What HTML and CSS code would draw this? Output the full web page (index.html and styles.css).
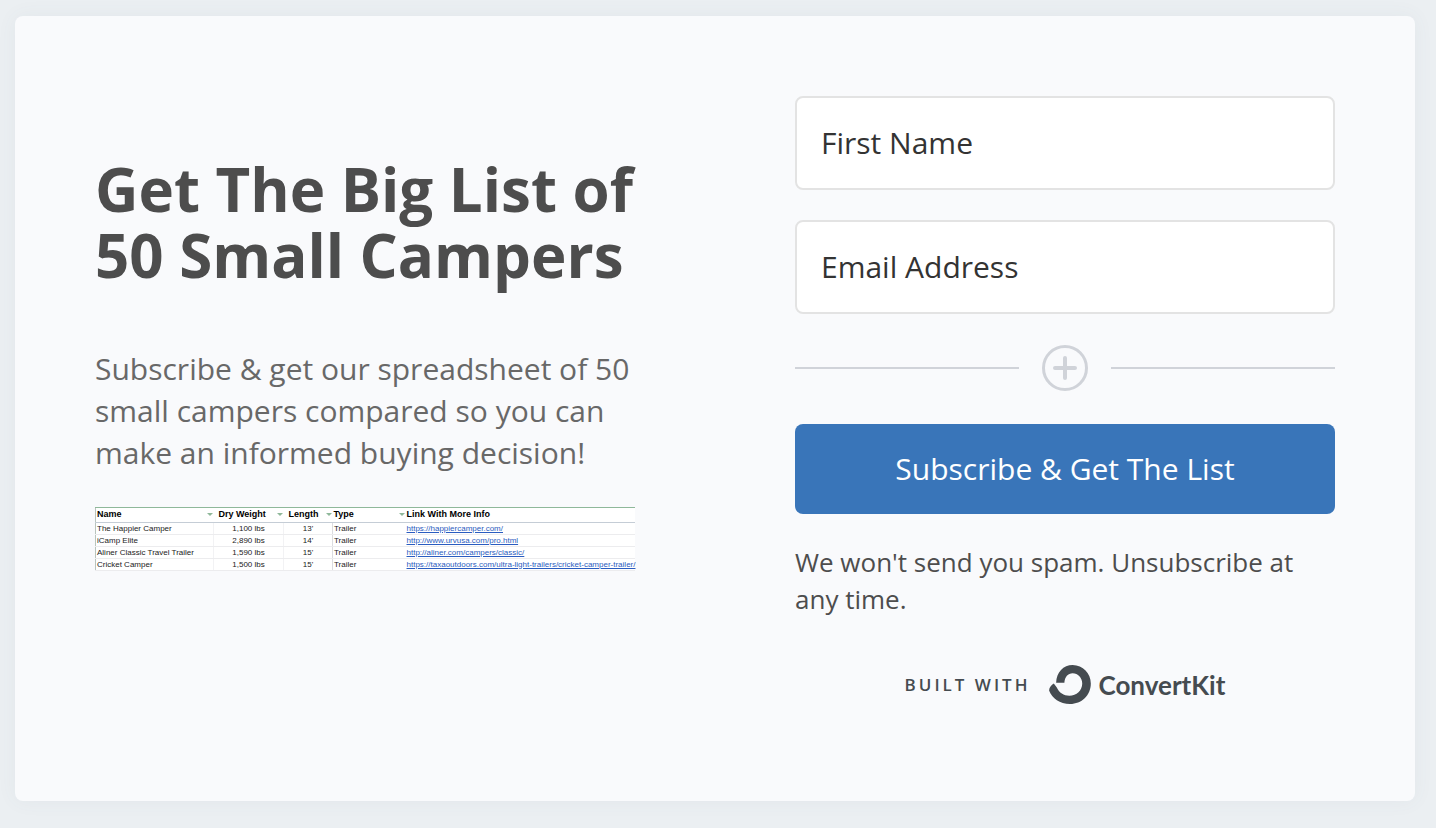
FILE: index.html
```html
<!DOCTYPE html>
<html lang="en">
<head>
  <meta charset="UTF-8">
  <meta name="viewport" content="width=device-width, initial-scale=1.0">
  <title>Get The Big List of 50 Small Campers</title>
  <link rel="stylesheet" href="styles.css">
</head>
<body>
  <main class="card">
    <section class="intro">
      <h1>Get The Big List of 50 Small Campers</h1>
      <p>Subscribe &amp; get our spreadsheet of 50 small campers compared so you can make an informed buying decision!</p>
      <table class="campers">
        <thead>
          <tr>
            <th class="name"><span>Name<i class="filter"></i></span></th>
            <th class="weight"><span>Dry Weight<i class="filter"></i></span></th>
            <th class="length"><span>Length<i class="filter"></i></span></th>
            <th class="type"><span>Type<i class="filter"></i></span></th>
            <th>Link With More Info</th>
          </tr>
        </thead>
        <tbody>
          <tr><td>The Happier Camper</td><td>1,100 lbs</td><td>13'</td><td>Trailer</td><td><a href="https://happiercamper.com/">https://happiercamper.com/</a></td></tr>
          <tr><td>iCamp Elite</td><td>2,890 lbs</td><td>14'</td><td>Trailer</td><td><a href="http://www.urvusa.com/pro.html">http://www.urvusa.com/pro.html</a></td></tr>
          <tr><td>Aliner Classic Travel Trailer</td><td>1,590 lbs</td><td>15'</td><td>Trailer</td><td><a href="http://aliner.com/campers/classic/">http://aliner.com/campers/classic/</a></td></tr>
          <tr><td>Cricket Camper</td><td>1,500 lbs</td><td>15'</td><td>Trailer</td><td><a href="https://taxaoutdoors.com/ultra-light-trailers/cricket-camper-trailer/">https://taxaoutdoors.com/ultra-light-trailers/cricket-camper-trailer/</a></td></tr>
        </tbody>
      </table>
    </section>

    <form class="signup">
      <input type="text" name="first_name" placeholder="First Name" aria-label="First Name">
      <input type="email" name="email" placeholder="Email Address" aria-label="Email Address">
      <div class="divider">
        <svg width="46" height="46" viewBox="0 0 46 46" fill="none" stroke="currentColor" aria-hidden="true">
          <circle cx="23" cy="23" r="21.5" stroke-width="3"/>
          <path d="M23 13v20M13 23h20" stroke-width="4" stroke-linecap="round"/>
        </svg>
      </div>
      <button type="submit">Subscribe &amp; Get The List</button>
      <p class="note">We won't send you spam. Unsubscribe at any time.</p>
      <a class="built" href="https://convertkit.com">
        <span class="built-with">Built with</span>
        <svg width="42" height="39" viewBox="0 0 126 118" aria-hidden="true">
          <path fill="currentColor" d="M21 54C22 22 43 0 71 0c31 0 55 25 55 56 0 36-28 62-63 62C32 118 9 101 0 78c-1-9 6-17 14-22l9 12c7 16 21 25 38 25 22 0 39-16 39-37 0-18-13-31-29-31-14 0-24 11-25 29z"/>
        </svg>
        <span class="brand">ConvertKit</span>
      </a>
    </form>
  </main>
</body>
</html>
```
FILE: styles.css
```css
* {
  box-sizing: border-box;
}
body {
  margin: 0;
  padding: 16px 21px 27px 15px;
  background: #ebeff2;
  font-family: "Open Sans", sans-serif;
}
.card {
  display: grid;
  grid-template-columns: 1fr 1fr;
  gap: 160px;
  align-items: center;
  padding: 80px 80px 97px;
  background: #f9fafc;
  border-radius: 8px;
  box-shadow: 0 0 20px rgba(80, 100, 120, 0.06);
}
.intro {
  min-width: 0;
  padding-bottom: 74px;
}
h1 {
  margin: 0 0 60px;
  color: #4d4d4d;
  font-size: 60px;
  line-height: 66px;
}
.intro p {
  margin: 0 0 33px;
  color: #686868;
  font-size: 30px;
  line-height: 42px;
}
.campers {
  width: 100%;
  table-layout: fixed;
  border-collapse: collapse;
  background: #fff;
  border-top: 1px solid #8fb89a;
  border-left: 1px solid #b9c4bd;
  color: #222;
  font-family: "Liberation Sans", Arial, sans-serif;
  font-size: 8px;
  line-height: 11px;
}
.campers th,
.campers td {
  padding: 0 1px;
  border-bottom: 1px solid #ececee;
  text-align: left;
  white-space: nowrap;
}
.campers th {
  height: 15px;
  border-bottom: 1px solid #c5cdd6;
  color: #000;
  font-size: 9px;
}
.campers th span {
  display: flex;
  align-items: center;
  justify-content: space-between;
}
.name {
  width: 118px;
}
.weight {
  width: 70px;
}
.length {
  width: 49px;
}
.type {
  width: 73px;
}
.campers .weight,
.campers .length {
  padding-left: 5px;
}
.campers td:nth-child(2),
.campers td:nth-child(3) {
  border-left: 1px solid #f2f2f4;
  text-align: center;
}
.campers td:nth-child(4) {
  border-left: 1px solid #dcdcdf;
}
.filter {
  border: 3px solid transparent;
  border-top: 3px solid #8fb89a;
  border-bottom: 0;
}
.campers a {
  color: #2a5cc0;
}
.signup {
  display: flex;
  flex-direction: column;
  min-width: 0;
}
.signup input {
  width: 100%;
  height: 94px;
  margin-bottom: 30px;
  padding: 0 24px 2px;
  border: 2px solid #e3e3e3;
  border-radius: 8px;
  background: #fff;
  color: #333;
  font: 30px "Open Sans", sans-serif;
}
.signup input::placeholder {
  color: #333;
  opacity: 1;
}
.divider {
  display: flex;
  align-items: center;
  gap: 23px;
  margin: 1px 0 33px;
  color: #d0d3d9;
}
.divider::before,
.divider::after {
  content: "";
  flex: 1;
  height: 2px;
  background: currentColor;
}
.signup button {
  height: 90px;
  padding: 0 24px 2px;
  border: 0;
  border-radius: 8px;
  background: #3975b9;
  color: #fff;
  font: 30px "Open Sans", sans-serif;
  cursor: pointer;
}
.note {
  margin: 30px 0 47px;
  color: #4d4d4d;
  font-size: 26px;
  line-height: 37px;
}
.built {
  display: flex;
  align-items: center;
  justify-content: center;
  color: #454b50;
  text-decoration: none;
}
.built-with {
  margin-right: 18px;
  font-size: 17px;
  font-weight: 600;
  letter-spacing: 3px;
  text-transform: uppercase;
}
.brand {
  margin-left: 8px;
  font-family: Lato, sans-serif;
  font-size: 26px;
  font-weight: 700;
}
```
